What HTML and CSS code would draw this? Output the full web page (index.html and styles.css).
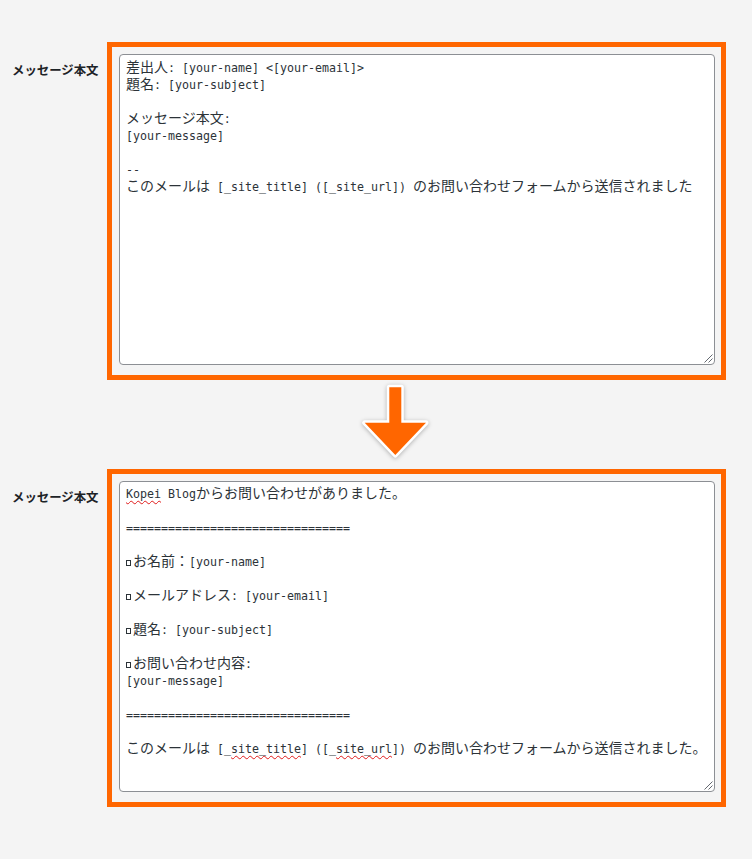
FILE: index.html
```html
<!DOCTYPE html>
<html lang="ja">
<head>
<meta charset="utf-8">
<title>メッセージ本文</title>
<link rel="stylesheet" href="styles.css">
</head>
<body>
<main class="page">
  <section class="row">
    <div class="label">メッセージ本文</div>
    <div class="frame">
      <div class="ta ta-first">
        <div class="ln">差出人<span class="m">: [your-name] &lt;[your-email]&gt;</span></div>
        <div class="ln">題名<span class="m">: [your-subject]</span></div>
        <div class="ln"></div>
        <div class="ln">メッセージ本文<span class="m">:</span></div>
        <div class="ln"><span class="m">[your-message]</span></div>
        <div class="ln"></div>
        <div class="ln"><span class="m">-- </span></div>
        <div class="ln">このメールは<span class="m"> [_site_title] ([_site_url]) </span>のお問い合わせフォームから送信されました</div>
        <svg class="grip" width="10" height="10" viewBox="0 0 10 10"><path d="M9.5 1.5 L1.5 9.5 M9.5 5.5 L5.5 9.5" stroke="#646970" stroke-width="1" fill="none"/></svg>
      </div>
    </div>
  </section>

  <div class="arrow-row">
    <svg class="arrow" width="80" height="89" viewBox="0 0 80 89">
      <path d="M34.3 7.3 H46.3 V42.7 H71 L40.3 75 L9.7 42.7 H34.3 Z" fill="#ff6600" stroke="#ffffff" stroke-width="5" stroke-linejoin="round" paint-order="stroke"/>
    </svg>
  </div>

  <section class="row">
    <div class="label">メッセージ本文</div>
    <div class="frame">
      <div class="ta ta-second">
        <div class="ln"><span class="m"><span class="sp">Kopei</span> Blog</span>からお問い合わせがありました。</div>
        <div class="ln"></div>
        <div class="ln"><span class="m">================================</span></div>
        <div class="ln"></div>
        <div class="ln"><span class="sq"></span>お名前：<span class="m">[your-name]</span></div>
        <div class="ln"></div>
        <div class="ln"><span class="sq"></span>メールアドレス<span class="m">: [your-email]</span></div>
        <div class="ln"></div>
        <div class="ln"><span class="sq"></span>題名<span class="m">: [your-subject]</span></div>
        <div class="ln"></div>
        <div class="ln"><span class="sq"></span>お問い合わせ内容<span class="m">:</span></div>
        <div class="ln"><span class="m">[your-message]</span></div>
        <div class="ln"></div>
        <div class="ln"><span class="m">================================</span></div>
        <div class="ln"></div>
        <div class="ln">このメールは<span class="m"> [_<span class="sp">site_title</span>] ([_<span class="sp">site_url</span>]) </span>のお問い合わせフォームから送信されました。</div>
        <svg class="grip" width="10" height="10" viewBox="0 0 10 10"><path d="M9.5 1.5 L1.5 9.5 M9.5 5.5 L5.5 9.5" stroke="#646970" stroke-width="1" fill="none"/></svg>
      </div>
    </div>
  </section>
</main>
</body>
</html>
```

FILE: styles.css
```css
html, body {
  margin: 0;
  padding: 0;
  background: #f4f4f4;
}

.page {
  display: flex;
  flex-direction: column;
  padding-top: 42px;
}

.row {
  display: flex;
  align-items: flex-start;
}

.label {
  width: 95px;
  padding-left: 12px;
  padding-top: 19px;
  font-family: "Noto Sans CJK JP", sans-serif;
  font-weight: 700;
  font-size: 12.4px;
  line-height: 18px;
  color: #1d2327;
  white-space: nowrap;
}

.frame {
  width: 619px;
  box-sizing: border-box;
  border: 5px solid #ff6600;
  padding: 7px 6px 10px 7px;
}

.ta {
  position: relative;
  height: 311px;
  box-sizing: border-box;
  border: 1px solid #8c8f94;
  border-radius: 4px;
  background: #ffffff;
  padding: 3px 6px 0 6px;
  font-family: "Noto Sans CJK JP", sans-serif;
  font-size: 14px;
  color: #2c3338;
  overflow: hidden;
}

.ta-second {
  padding-top: 2px;
}

.ln {
  height: 17px;
  line-height: 17px;
  white-space: pre;
}

.m {
  font-family: "DejaVu Sans Mono", monospace;
  font-size: 11.63px;
  line-height: 17px;
}

.sp {
  text-decoration: underline wavy #e01b1b;
  text-decoration-thickness: 1px;
  text-underline-offset: 2px;
  text-decoration-skip-ink: none;
}

.sq {
  display: inline-block;
  box-sizing: border-box;
  width: 5px;
  height: 6px;
  margin-right: 2px;
  border: 1px solid #2c3338;
  vertical-align: 0;
}

.grip {
  position: absolute;
  right: 1px;
  bottom: 1px;
}

.arrow-row {
  height: 89px;
  display: flex;
}

.arrow {
  margin-left: 355px;
  filter: drop-shadow(0 1px 2px rgba(0, 0, 0, 0.28));
}
```
